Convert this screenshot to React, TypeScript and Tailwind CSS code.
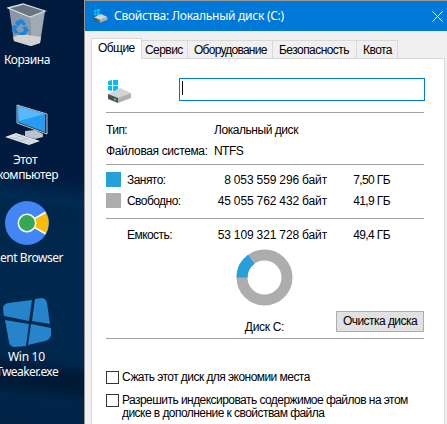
import type { ReactNode } from 'react';

function BinIcon() {
  return (
    <svg width="40" height="44" viewBox="0 0 40 44">
      <path d="M1 4 3 5 7 38 23 43 24 13Z" fill="#7f8fa3" />
      <path d="M2 5 23 14 24 43 7 38Z" fill="#8997a9" />
      <path d="M23 14 38 8 33 40 24 43Z" fill="#a1a9b3" />
      <path d="M6 34 15 31 34 34 33 40 24 43 7 38Z" fill="#d2d2d1" />
      <path d="M1 5 16 1 38 8 23 14Z" fill="#697583" stroke="#d6dce2" strokeWidth="1.3" />
      <g fill="#1686df">
        <path d="m9 18 6-2 4 5-2 2-3-3-2 3-4-2z" />
        <path d="m6 22 5 1-2 3 3 4-4 1-3-5z" />
        <path d="m11 30 5-1 1-3-2-1 4-2 3 4-4 5-6 0z" />
      </g>
    </svg>
  );
}

function ComputerIcon() {
  return (
    <svg width="44" height="42" viewBox="0 0 44 42">
      <path d="m20 27 10-1 8 4v3l-8 2-10-3z" fill="#b9c4cd" />
      <path d="m12 1 30 9v20L12 19z" fill="#26343f" stroke="#bdc7ce" />
      <path d="m13 2 27 8v18L13 18z" fill="#249df3" />
      <path d="m13 2 27 8L14 17z" fill="#58b8fa" />
      <path d="m0 33 11-4 24 8-11 4z" fill="#e1e5e8" />
      <path d="m5 33 21 6m-16-8 20 7M8 35l11-4m-4 6 11-4" stroke="#adb7c0" strokeWidth=".7" />
    </svg>
  );
}

function BrowserIcon() {
  return (
    <svg width="44" height="44" viewBox="0 0 44 44">
      <circle cx="22" cy="22" r="22" fill="#4285f4" />
      <path d="M25 22 40.5 11a22 22 0 0 1 0 22Z" fill="#fbbc05" />
      <path d="m28 18.5 12.5-7.2M28 25.5l12.5 7.2" stroke="white" strokeWidth="1.7" />
      <circle cx="22" cy="22" r="8.7" fill="#34a853" stroke="white" strokeWidth="1.5" />
    </svg>
  );
}

function TweakerIcon() {
  return (
    <svg width="49" height="49" viewBox="0 0 49 49" fill="#2584ca">
      <path d="M5 5 29 2 26 23 1 18 0 11Q0 6 5 5Z" />
      <path d="m32 1 6-1q5 0 6 5l3 21-18-3z" />
      <path d="m2 22 24 4-3 22-11 1q-5 0-6-5z" />
      <path d="m28 26 20 4v7q-1 5-6 6l-17 4z" />
    </svg>
  );
}

function DriveIcon({ className }: { className: string }) {
  return (
    <svg className={className} viewBox="0 0 24 23">
      <path d="m0 1 4-1v5H0zm5-1 5-1v6H5zM0 6h4v5l-4-1zm5 0h5v6l-5-1z" fill="#00bff3" />
      <path d="m0 14 12-6 11 5-14 6z" fill="#d4d4d4" />
      <path d="m0 14 10 4v5L0 19z" fill="#505050" />
      <path d="m10 18 13-5v5l-13 5z" fill="#b0b0b0" />
      <path d="m6 18 2 1v2l-2-1z" fill="#35dd67" />
    </svg>
  );
}

function Tab({ className, children }: { className: string; children: ReactNode }) {
  return (
    <div className={`h-[18px] shrink-0 whitespace-nowrap border-r border-t border-[#d9d9d9] bg-[#f0f0f0] pt-[2px] leading-[15px] ${className}`}>
      {children}
    </div>
  );
}

function UsageRow({ label, bytes, size, swatch }: { label: string; bytes: string; size: string; swatch?: string }) {
  return (
    <div className="flex h-[21px] items-center">
      <span className={`mr-[6px] h-[15px] w-[15px] ${swatch ?? ''}`} />
      <span className="w-[80px]">{label}</span>
      <span className="w-[120px] text-right tracking-[-0.15px]">{bytes}</span>
      <span className="w-[63px] text-right tracking-[-0.6px]">{size}</span>
    </div>
  );
}

function Check({ children }: { children: ReactNode }) {
  return (
    <label className="flex whitespace-nowrap leading-[13px]">
      <span className="mr-[3px] h-[13px] w-[13px] shrink-0 border border-[#333] bg-white" />
      <span>{children}</span>
    </label>
  );
}

export default function App() {
  return (
    <div className="flex h-[424px] w-[447px] overflow-hidden font-['Liberation_Sans',sans-serif] text-[12px] tracking-[-0.55px] text-black">
      <aside className="flex w-[84px] shrink-0 flex-col overflow-hidden bg-[linear-gradient(187deg,#001b3d_0%,#001b40_42%,#002b52_47%,#00264c_49%,#00294f_78%,#00264b_84%,#001936_87%,#001b36_90%,#002549_93%,#002346_100%)] font-['Noto_Sans',sans-serif] text-[12px] leading-[15px] tracking-[-0.45px] text-white">
        <div className="h-[104px] pl-[7px] pt-[3px]">
          <BinIcon />
          <div className="-ml-[3px] mt-[5px] whitespace-nowrap">Корзина</div>
        </div>
        <div className="h-[97px] pl-[5px]">
          <ComputerIcon />
          <div className="ml-[8px] mt-[6px]">Этот</div>
          <div className="-ml-[8px] whitespace-nowrap">компьютер</div>
        </div>
        <div className="h-[96px] pl-[5px]">
          <BrowserIcon />
          <div className="-ml-[5px] mt-[5px] whitespace-nowrap">ent Browser</div>
        </div>
        <div className="pl-[3px] pt-px">
          <TweakerIcon />
          <div className="ml-[5px] mt-[2px] whitespace-nowrap tracking-[-0.3px]">Win 10</div>
          <div className="-ml-[7px] whitespace-nowrap tracking-[-0.55px]">Tweaker.exe</div>
        </div>
      </aside>
      <main className="flex min-w-0 flex-1 flex-col border-l border-t border-[#969696] bg-[#f0f0f0]">
        <header className="flex h-[30px] shrink-0 items-center bg-[#0078d7] pl-[9px] pr-[4px] font-['Noto_Sans',sans-serif] text-[12px] tracking-[-0.26px] text-white">
          <DriveIcon className="mr-[6px] h-[14px] w-[14px]" />
          <span className="whitespace-nowrap">Свойства: Локальный диск (C:)</span>
          <svg className="ml-auto" width="11" height="11" viewBox="0 0 11 11"><path d="m.5.5 10 10m0-10-10 10" stroke="white" /></svg>
        </header>
        <nav className="flex h-[27px] shrink-0 items-end pl-[6px]">
          <div className="z-10 -mb-px h-[21px] w-[51px] shrink-0 border-x border-t border-[#d9d9d9] bg-white pl-[6px] pt-[2px] leading-[15px]">Общие</div>
          <Tab className="w-[46px] pl-[3px]">Сервис</Tab>
          <Tab className="w-[85px] pl-[6px] tracking-[-0.75px]">Оборудование</Tab>
          <Tab className="w-[84px] pl-[6px]">Безопасность</Tab>
          <Tab className="w-[41px] pl-[6px]">Квота</Tab>
        </nav>
        <section className="ml-[6px] mr-[2px] flex-1 border-l border-r border-t border-[#d9d9d9] bg-white pl-[14px] pr-[20px]">
          <div className="flex h-[53px] items-start justify-between">
            <DriveIcon className="ml-[2px] mt-[21px] h-[23px] w-[24px]" />
            <div className="-mr-[1px] mt-[19px] h-[23px] w-[246px] border border-[#0078d7] pl-[2px] pt-[2px]">
              <div className="h-[14px] w-px bg-black" />
            </div>
          </div>
          <div className="h-[52px] border-t border-[#a0a0a0] pt-[6px]">
            <div className="flex h-[21px] items-center"><span className="w-[108px]">Тип:</span><span className="tracking-[-0.45px]">Локальный диск</span></div>
            <div className="flex h-[21px] items-center"><span className="w-[108px] whitespace-nowrap tracking-[-0.38px]">Файловая система:</span><span>NTFS</span></div>
          </div>
          <div className="h-[54px] border-t border-[#a0a0a0] pt-[4px]">
            <UsageRow label="Занято:" bytes="8 053 559 296 байт" size="7,50 ГБ" swatch="bg-[#26a0da]" />
            <UsageRow label="Свободно:" bytes="45 055 762 432 байт" size="41,9 ГБ" swatch="bg-[#adadad]" />
          </div>
          <div className="h-[120px] border-t border-[#a0a0a0] pt-[5px]">
            <UsageRow label="Емкость:" bytes="53 109 321 728 байт" size="49,4 ГБ" />
            <div className="flex">
              <div className="ml-[130px] mt-[4px] flex w-[57px] flex-col items-center">
                <svg width="57" height="57" viewBox="0 0 57 57">
                  <circle cx="28.5" cy="28.5" r="22.5" fill="none" stroke="#adadad" strokeWidth="11" />
                  <path d="M6 28.5A22.5 22.5 0 0 1 15.3 10.3" fill="none" stroke="#26a0da" strokeWidth="11" />
                </svg>
                <span className="mt-[13px] whitespace-nowrap leading-[16px] tracking-[-0.3px]">Диск C:</span>
              </div>
              <button className="ml-[43px] mt-[66px] h-[21px] w-[88px] shrink-0 whitespace-nowrap border border-[#adadad] bg-[#e1e1e1] leading-[19px]">Очистка диска</button>
            </div>
          </div>
          <div className="flex flex-col gap-[10px] border-t border-[#a0a0a0] pt-[32px]">
            <Check>Сжать этот диск для экономии места</Check>
            <Check>Разрешить индексировать содержимое файлов на этом<br />диске в дополнение к свойствам файла</Check>
          </div>
        </section>
      </main>
    </div>
  );
}
